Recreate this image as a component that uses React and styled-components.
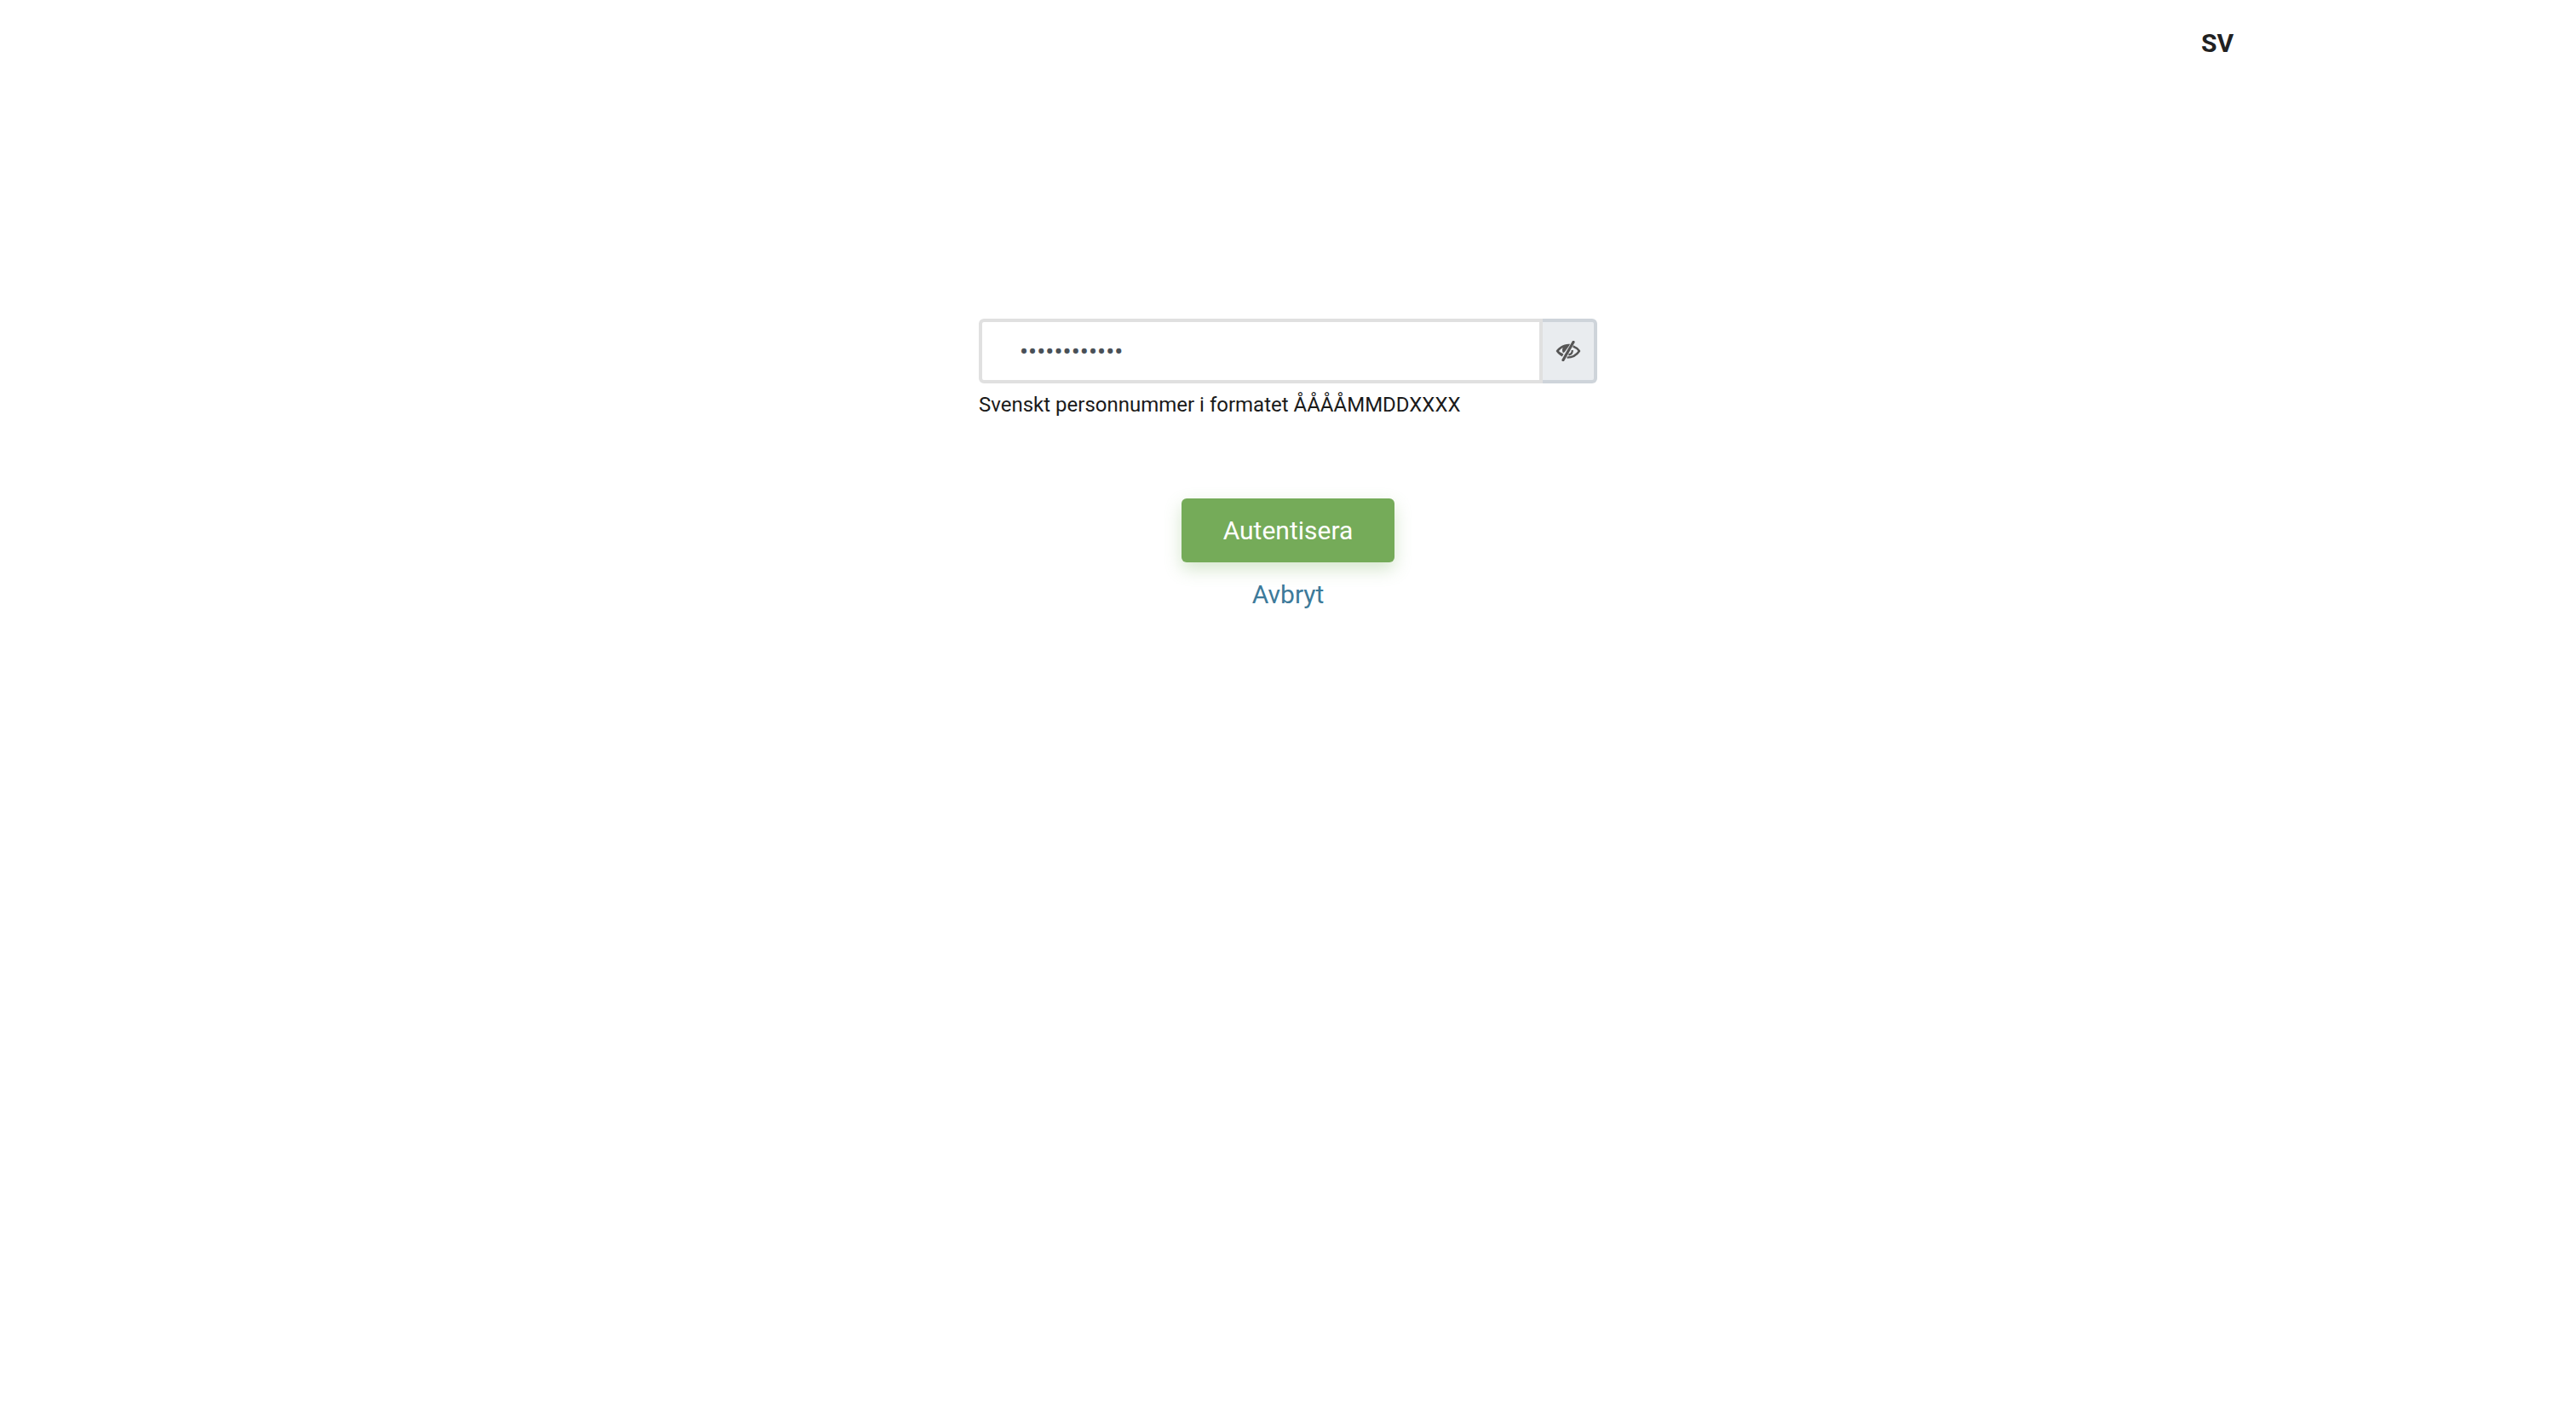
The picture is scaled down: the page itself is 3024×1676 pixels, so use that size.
import React from 'react';
import styled, { createGlobalStyle } from 'styled-components';

const GlobalStyle = createGlobalStyle`
  html, body {
    margin: 0;
    background: #fff;
    font-family: Roboto, "Liberation Sans", sans-serif;
  }
`

const Page = styled.div`
  width: 100%;
  min-height: 1676px;
  display: flex;
  flex-direction: column;
`
const TopBar = styled.header`
  display: flex;
  justify-content: flex-end;
  height: 100px;
  align-items: center;
  padding-right: 402px;
`
const Lang = styled.span`
  font-size: 30px;
  font-weight: 700;
  color: #212121;
`
const Main = styled.main`
  display: flex;
  flex-direction: column;
  align-items: center;
  padding-top: 274px;
`
const Form = styled.form`
  width: 726px;
`
const InputGroup = styled.div`
  display: flex;
  height: 76px;
`
const Input = styled.input`
  flex: 1;
  min-width: 0;
  box-sizing: border-box;
  border: 4px solid #e0e0e0;
  border-radius: 6px 0 0 6px;
  padding: 0 44px;
  font-family: inherit;
  font-size: 30px;
  color: #495057;
  outline: none;
`
const EyeButton = styled.button`
  width: 64px;
  box-sizing: border-box;
  border: 4px solid #ced4da;
  border-left: 0;
  border-radius: 0 6px 6px 0;
  background: #e9ecef;
  color: #555;
  display: flex;
  align-items: center;
  justify-content: center;
  padding: 0;
`
const Help = styled.p`
  margin: 10px 0 0;
  font-size: 24px;
  line-height: 30px;
  color: #1a1a1a;
`
const Actions = styled.div`
  display: flex;
  flex-direction: column;
  align-items: center;
  margin-top: 95px;
`
const SubmitButton = styled.button`
  width: 250px;
  height: 75px;
  border: 0;
  border-radius: 6px;
  background: #75ab59;
  color: #fff;
  font-family: inherit;
  font-size: 30px;
  box-shadow: 0 8px 20px rgba(117, 171, 89, 0.3);
`
const CancelLink = styled.a`
  margin-top: 19px;
  font-size: 30px;
  line-height: 38px;
  color: #3d7a9a;
  text-decoration: none;
`

// eye with a slash, left half filled
function LowVisionIcon() {
  return (
    <svg width='30' height='24' viewBox='0 0 30 24' fill='none'>
      <path d='M21 1.5 L9 22.5' stroke='currentColor' strokeWidth='3.2' strokeLinecap='round' />
      <path fill='currentColor' d='M17 3.8 C9.5 3.2 4 7.2 0.6 12 C2.3 14.8 5 17 7.8 18.4 L9.4 15.4 C7 14.4 5.2 13.2 4 12 C5.4 10.2 7 8.9 8.8 8 C8 9.4 7.8 10.8 8.2 12.4 C8.8 14.6 10 14.2 11 12.8 L16.2 5.4 Z' />
      <path stroke='currentColor' strokeWidth='2.4' strokeLinejoin='round' d='M20.6 6.4 C23.6 7.6 26.4 9.6 28 12 C25 16.4 20 19.6 13.6 19.6' />
      <path stroke='currentColor' strokeWidth='2.2' d='M19.8 11 C20 14 18 16 15.4 16.6' />
    </svg>
  )
}

function App() {
  return (
    <Page>
      <GlobalStyle />
      <TopBar>
        <Lang>SV</Lang>
      </TopBar>
      <Main>
        <Form onSubmit={e => e.preventDefault()}>
          <InputGroup>
            <Input type='password' defaultValue='199001011234' readOnly />
            <EyeButton type='button' aria-label='Visa'>
              <LowVisionIcon />
            </EyeButton>
          </InputGroup>
          <Help>Svenskt personnummer i formatet ÅÅÅÅMMDDXXXX</Help>
          <Actions>
            <SubmitButton type='submit'>Autentisera</SubmitButton>
            <CancelLink href='#'>Avbryt</CancelLink>
          </Actions>
        </Form>
      </Main>
    </Page>
  )
};

export default App;
